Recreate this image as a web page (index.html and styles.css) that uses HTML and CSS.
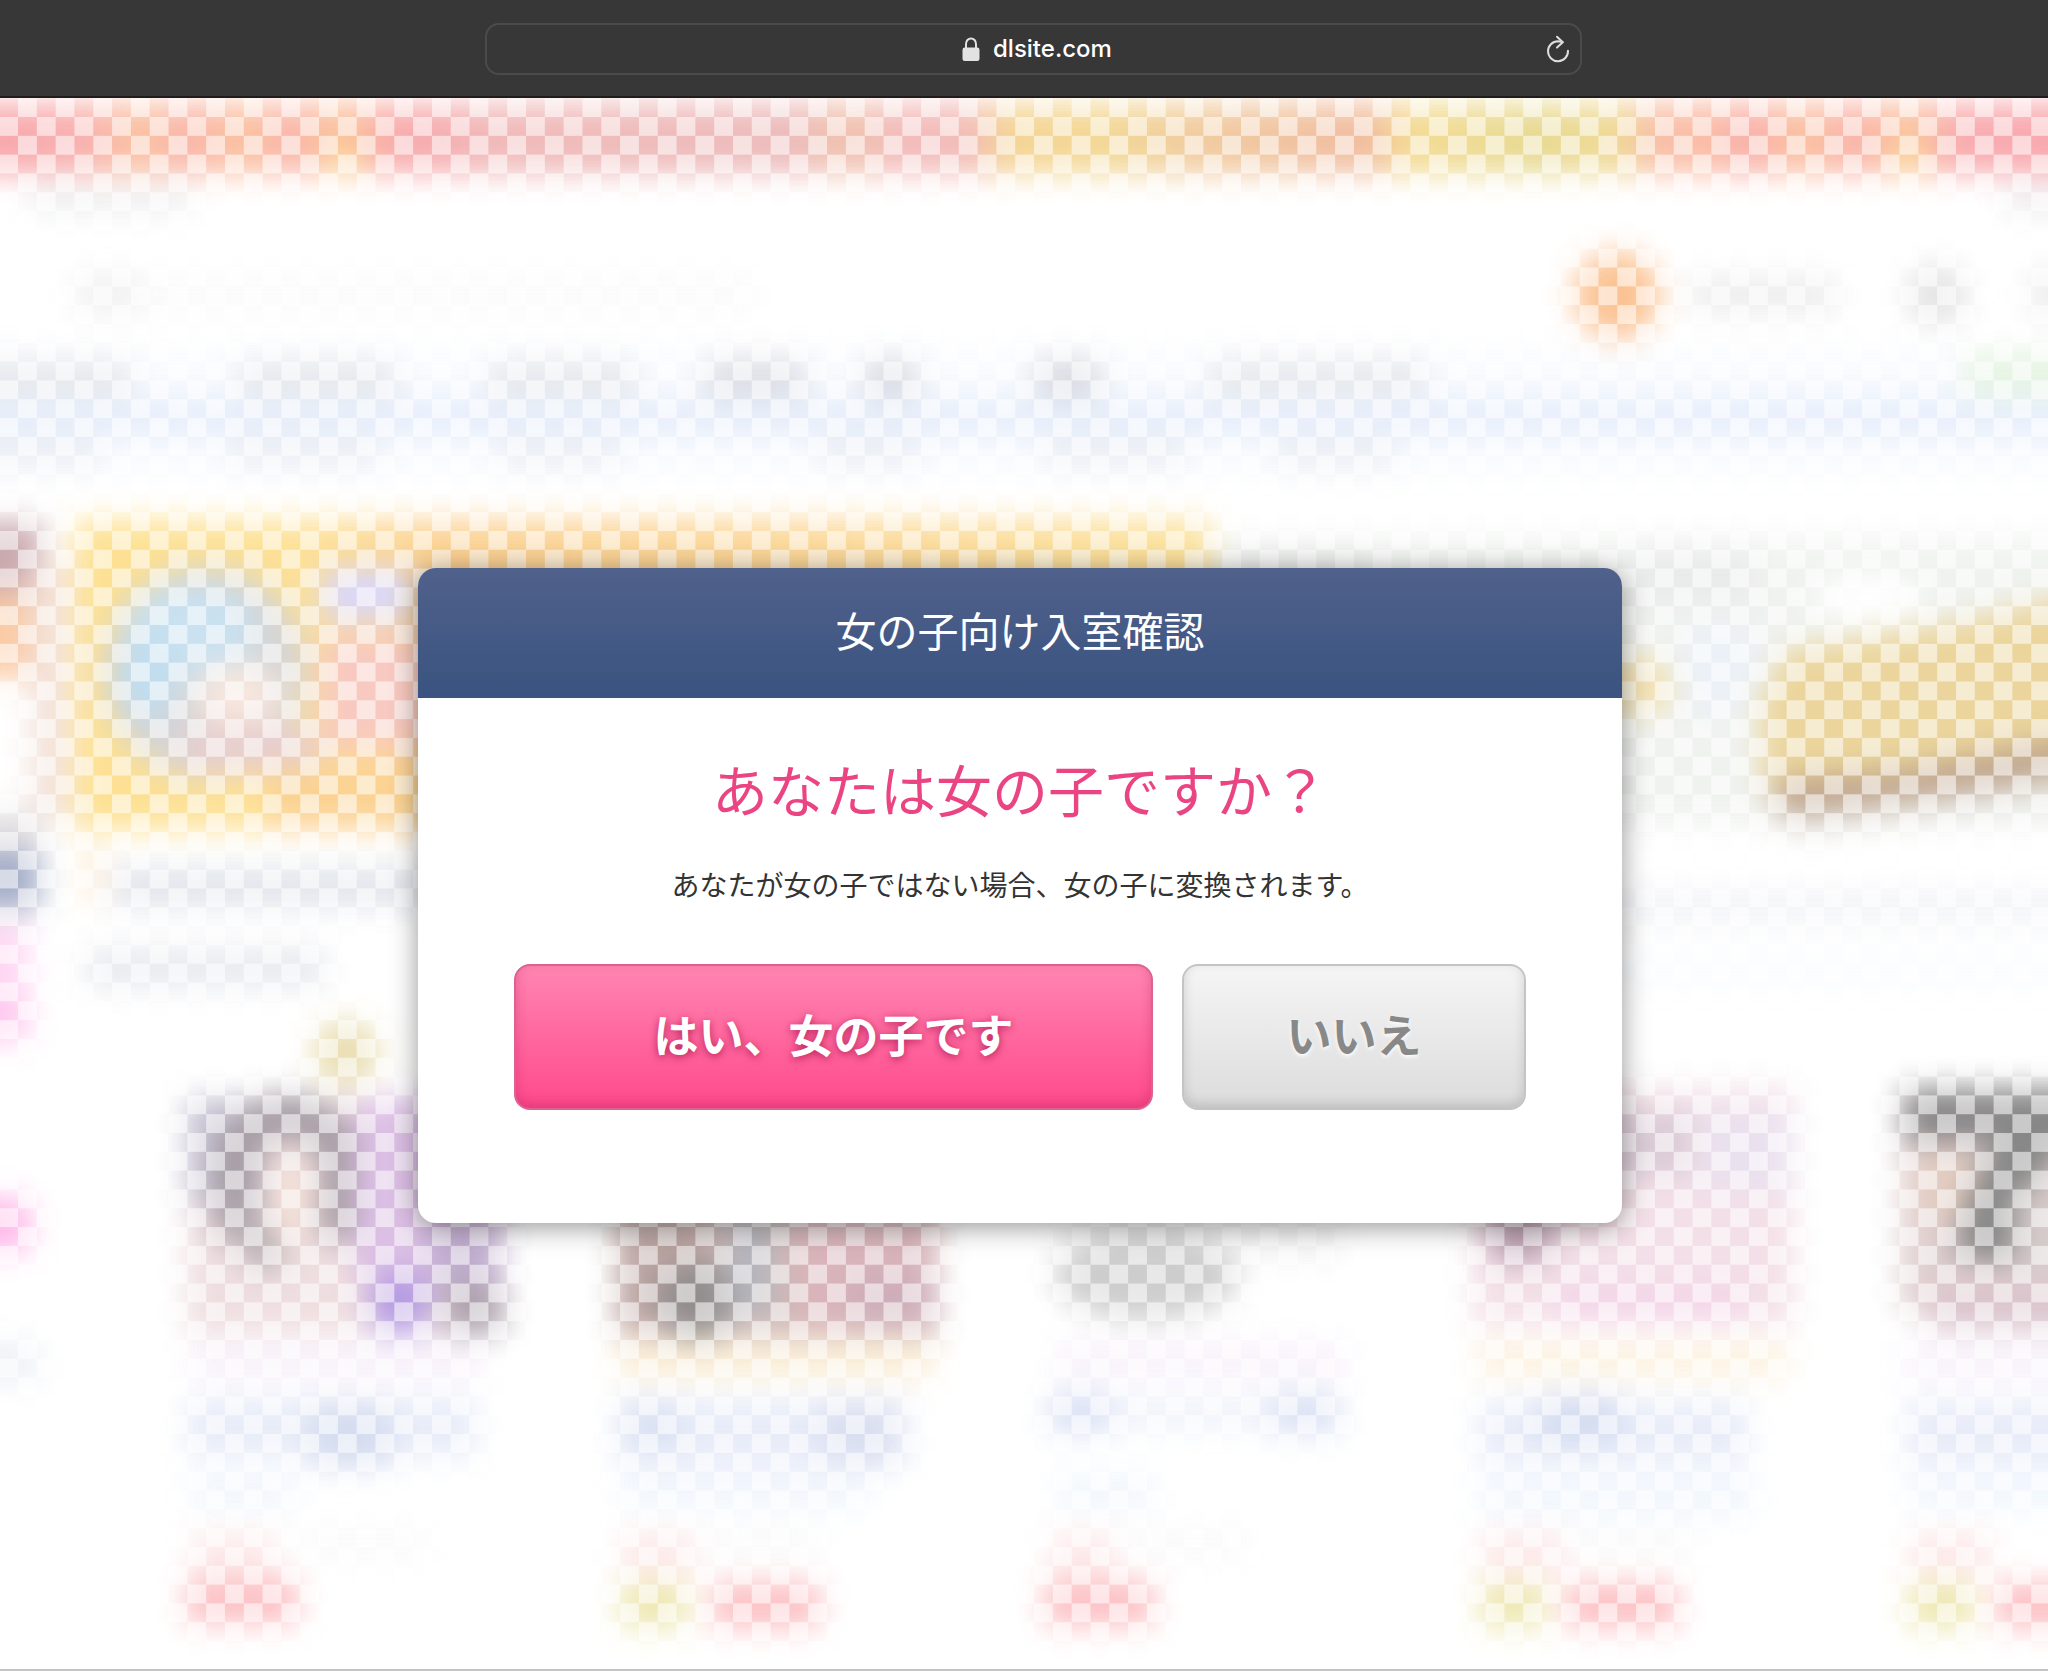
FILE: index.html
```html
<!DOCTYPE html>
<html lang="ja">
<head>
<meta charset="utf-8">
<meta name="viewport" content="width=device-width, initial-scale=1">
<title>女の子向け入室確認</title>
<link rel="stylesheet" href="styles.css">
</head>
<body>
<header class="toolbar">
  <div class="address">
    <label class="address-field">
      <svg class="lock" viewBox="0 0 18 24" aria-hidden="true">
        <path d="M4 12V7a5 5.600 0 0 1 10 0v5" fill="none" stroke="#e2e2e2" stroke-width="2"/>
        <rect x="0.500" y="10.500" width="17" height="13.500" rx="2.200" fill="#e2e2e2"/>
      </svg>
      <input class="address-input" type="text" value="dlsite.com" aria-label="アドレス">
    </label>
    <button class="reload" type="button" aria-label="再読み込み">
      <svg viewBox="0 0 24 28" aria-hidden="true">
        <path d="M16.500 7L12 6.200A10 10 0 1 0 22 15.800" fill="none" stroke="#dedede" stroke-width="2" stroke-linecap="round" stroke-linejoin="round"/>
        <path d="M11 1.800L16.800 7.200L11 12.600" fill="none" stroke="#dedede" stroke-width="2" stroke-linecap="round" stroke-linejoin="round"/>
      </svg>
    </button>
  </div>
</header>

<main class="page">
  <svg class="backdrop" viewBox="0 98 2048 1571" preserveAspectRatio="xMidYMin slice" aria-hidden="true">
    <defs>
      <filter id="soft" filterUnits="userSpaceOnUse" x="-60" y="60" width="2170" height="1650" color-interpolation-filters="sRGB"><feGaussianBlur stdDeviation="15"/></filter>
      <linearGradient id="strip" gradientUnits="userSpaceOnUse" x1="0" y1="0" x2="2048" y2="0">
        <stop offset="0" stop-color="#f8a4a8"/>
        <stop offset=".04" stop-color="#f8acac"/>
        <stop offset=".067" stop-color="#fac09c"/>
        <stop offset=".09" stop-color="#f9b2a6"/>
        <stop offset=".12" stop-color="#fbc09c"/>
        <stop offset=".14" stop-color="#f9b2a8"/>
        <stop offset=".168" stop-color="#fbc094"/>
        <stop offset=".19" stop-color="#f8a8a8"/>
        <stop offset=".21" stop-color="#f6a8ac"/>
        <stop offset=".24" stop-color="#f0b6b6"/>
        <stop offset=".39" stop-color="#ecb8b8"/>
        <stop offset=".41" stop-color="#efc0a8"/>
        <stop offset=".44" stop-color="#f2b8b8"/>
        <stop offset=".475" stop-color="#f2b8b4"/>
        <stop offset=".49" stop-color="#f4d290"/>
        <stop offset=".54" stop-color="#f2d690"/>
        <stop offset=".58" stop-color="#f0ca9a"/>
        <stop offset=".67" stop-color="#f0b89c"/>
        <stop offset=".685" stop-color="#f4da8e"/>
        <stop offset=".75" stop-color="#e6d88e"/>
        <stop offset=".79" stop-color="#efd890"/>
        <stop offset=".81" stop-color="#f9b9a6"/>
        <stop offset=".83" stop-color="#fabca0"/>
        <stop offset=".855" stop-color="#f9aca8"/>
        <stop offset=".88" stop-color="#fbc09c"/>
        <stop offset=".905" stop-color="#f9b0a8"/>
        <stop offset=".933" stop-color="#fbc098"/>
        <stop offset=".955" stop-color="#f8a8ac"/>
        <stop offset="1" stop-color="#f8a4aa"/>
      </linearGradient>
      <linearGradient id="sale" gradientUnits="userSpaceOnUse" x1="80" y1="0" x2="1210" y2="0">
        <stop offset="0" stop-color="#fddf8c"/>
        <stop offset=".2" stop-color="#fddf90"/>
        <stop offset=".32" stop-color="#fbce8c"/>
        <stop offset=".6" stop-color="#fbd492"/>
        <stop offset="1" stop-color="#fbe096"/>
      </linearGradient>
      <pattern id="checker" patternUnits="userSpaceOnUse" x="-0.800" y="98.200" width="37.630" height="37.630">
        <path d="M18.815 0h18.815v18.815h-18.815zM0 18.815h18.815v18.815h-18.815z" fill="#fff" fill-opacity=".55"/>
      </pattern>
    </defs>
    <rect x="0" y="98" width="2048" height="1571" fill="#fff"/>

    <g filter="url(#soft)" opacity=".94">
      <rect x="-60" y="104" width="2170" height="70" fill="url(#strip)"/>
      <circle cx="344" cy="158" r="14" fill="#fbe08c"/>
      <circle cx="1908" cy="154" r="14" fill="#fbe08c"/>
      <!-- site header -->
      <rect x="30" y="184" width="160" height="30" fill="#eeeff0"/>
      <rect x="2005" y="186" width="100" height="26" fill="#ebe8ec"/>
      <rect x="75" y="272" width="65" height="44" fill="#f1f1f1"/>
      <rect x="140" y="276" width="620" height="36" fill="#fafafa"/>
      <circle cx="1617" cy="295" r="44" fill="#fbc08e"/>
      <rect x="1690" y="276" width="146" height="38" fill="#ececec"/>
      <circle cx="1937" cy="295" r="32" fill="#e4e4e4"/>
      <rect x="2030" y="268" width="60" height="52" fill="#ededed"/>

      <!-- navigation rows -->
      <rect x="-60" y="350" width="2170" height="125" fill="#f8fafe"/>
      <rect x="-60" y="398" width="2170" height="38" fill="#e5eefb"/>
      <g fill="#e5e6eb">
        <rect x="-60" y="360" width="190" height="36"/>
        <rect x="240" y="360" width="155" height="36"/>
        <rect x="490" y="360" width="145" height="36"/>
        <rect x="705" y="358" width="100" height="40" fill="#dcdde4"/>
        <rect x="865" y="358" width="50" height="40" fill="#d8d9e0"/>
        <rect x="1035" y="358" width="65" height="40" fill="#d8d9e0"/>
        <rect x="1210" y="360" width="215" height="34"/>
      </g>
      <rect x="1965" y="352" width="130" height="42" fill="#e4f4e0"/>
      <g fill="#ebeef3">
        <rect x="-60" y="438" width="160" height="32"/>
        <rect x="230" y="438" width="150" height="32"/>
        <rect x="500" y="438" width="120" height="32"/>
        <rect x="820" y="438" width="100" height="32"/>
        <rect x="1045" y="438" width="140" height="32"/>
        <rect x="1275" y="438" width="120" height="32"/>
      </g>

      <!-- left neighbour column -->
      <rect x="-60" y="522" width="102" height="72" fill="#c6a4aa"/>
      <rect x="-60" y="592" width="94" height="86" fill="#fbc8a0"/>
      <rect x="30" y="560" width="40" height="260" fill="#f2e0d8"/>
      <rect x="-60" y="812" width="100" height="40" fill="#e0dcdf"/>
      <rect x="-60" y="850" width="100" height="60" fill="#9ea8c4"/>
      <rect x="-60" y="922" width="88" height="120" fill="#ffd4f2"/>
      <rect x="-60" y="1000" width="88" height="34" fill="#ffc2ec"/>
      <rect x="-60" y="1198" width="90" height="54" fill="#ffb4e8"/>
      <rect x="-60" y="1340" width="100" height="44" fill="#edf1f6"/>

      <!-- main banner -->
      <rect x="74" y="520" width="1136" height="310" fill="url(#sale)"/>
      <ellipse cx="205" cy="672" rx="102" ry="106" fill="#d2d2d4"/>
      <ellipse cx="190" cy="630" rx="66" ry="46" fill="#c6e0f0"/>
      <ellipse cx="148" cy="676" rx="28" ry="44" fill="#bcdcf0"/>
      <ellipse cx="238" cy="696" rx="44" ry="34" fill="#f7e6dc"/>
      <ellipse cx="250" cy="748" rx="76" ry="26" fill="#e6cccc"/>
      <rect x="322" y="568" width="90" height="52" fill="#d8d6fc"/>
      <rect x="322" y="636" width="110" height="112" fill="#f8c6be"/>
      <rect x="270" y="768" width="160" height="62" fill="#fbd08c"/>
      <rect x="80" y="842" width="24" height="60" fill="#fdeed8"/>
      <rect x="112" y="866" width="320" height="42" fill="#e0e3ea"/>
      <rect x="86" y="948" width="240" height="40" fill="#e6e8ed"/>
      <circle cx="346" cy="1053" r="34" fill="#e8dcae"/>

      <!-- second banner -->
      <rect x="1212" y="538" width="900" height="288" fill="#eff2ef"/>
      <rect x="1225" y="556" width="140" height="40" fill="#e4e6e4"/>
      <rect x="1630" y="552" width="120" height="50" fill="#e8e9e9"/>
      <ellipse cx="1868" cy="598" rx="56" ry="24" fill="#fff"/>
      <ellipse cx="1720" cy="668" rx="46" ry="50" fill="#ebf1f7"/>
      <ellipse cx="1636" cy="686" rx="38" ry="30" fill="#f2dfac"/>
      <path d="M1760 700L1786 650L1950 624L2110 588V770L1800 806L1764 790Z" fill="#ead396"/>
      <path d="M1776 798L1900 788L2110 748" fill="none" stroke="#ba9e86" stroke-width="36"/>
      <path d="M1790 828L2110 782" fill="none" stroke="#e4e4e0" stroke-width="20"/>
      <rect x="1600" y="890" width="500" height="34" fill="#f2f3f7"/>
      <rect x="1600" y="950" width="500" height="40" fill="#fafcfe"/>

      <!-- thumbnail 1 -->
      <rect x="186" y="1098" width="316" height="236" fill="#eedcde"/>
      <rect x="186" y="1098" width="80" height="104" fill="#c2bed0"/>
      <path d="M236 1240V1150Q290 1080 342 1150V1240" fill="none" stroke="#a0969e" stroke-width="44"/>
      <path d="M240 1210L274 1266" fill="none" stroke="#b0a8ae" stroke-width="36"/>
      <ellipse cx="290" cy="1200" rx="22" ry="50" fill="#f6e0d8"/>
      <rect x="354" y="1098" width="148" height="184" fill="#dabce4"/>
      <rect x="430" y="1225" width="72" height="60" fill="#bca8cc"/>
      <circle cx="400" cy="1303" r="32" fill="#b094e2"/>
      <rect x="444" y="1284" width="60" height="50" fill="#a89ca6"/>
      <rect x="190" y="1344" width="290" height="36" fill="#f7effa"/>

      <!-- thumbnail 2 -->
      <rect x="616" y="1210" width="322" height="126" fill="#ccb4b2"/>
      <rect x="616" y="1210" width="90" height="112" fill="#b8a09c"/>
      <circle cx="696" cy="1300" r="40" fill="#8c8888"/>
      <rect x="728" y="1215" width="44" height="100" fill="#b0b2ba"/>
      <rect x="795" y="1215" width="140" height="112" fill="#d8b0b6"/>
      <rect x="850" y="1270" width="86" height="56" fill="#ccaab6"/>
      <rect x="618" y="1340" width="316" height="38" fill="#faecd2"/>

      <!-- thumbnail 3 -->
      <rect x="1060" y="1210" width="280" height="50" fill="#f2f2f2"/>
      <ellipse cx="1146" cy="1276" rx="92" ry="44" fill="#cacaca"/>
      <rect x="1056" y="1342" width="290" height="36" fill="#f8f0fb"/>

      <!-- thumbnail 4 -->
      <rect x="1472" y="1088" width="322" height="238" fill="#f3dee6"/>
      <rect x="1600" y="1110" width="90" height="66" fill="#d8c8d4"/>
      <rect x="1700" y="1110" width="90" height="80" fill="#e9e0ef"/>
      <rect x="1490" y="1200" width="60" height="62" fill="#b89cae"/>
      <rect x="1560" y="1286" width="180" height="34" fill="#f3d2e8"/>
      <rect x="1474" y="1342" width="316" height="36" fill="#fcf1de"/>

      <!-- thumbnail 5 -->
      <rect x="1900" y="1090" width="210" height="224" fill="#decccc"/>
      <rect x="1904" y="1088" width="204" height="54" fill="#828082"/>
      <ellipse cx="1946" cy="1184" rx="32" ry="38" fill="#e2cabe"/>
      <path d="M2060 1110Q1994 1170 1984 1260" fill="none" stroke="#808080" stroke-width="58"/>
      <rect x="2014" y="1190" width="90" height="80" fill="#d4c8c8"/>
      <rect x="1930" y="1286" width="180" height="44" fill="#d8c0ca"/>
      <rect x="1904" y="1346" width="200" height="34" fill="#f7effb"/>

      <!-- captions -->
      <g fill="#e6ebf8">
        <rect x="186" y="1398" width="290" height="60"/>
        <rect x="310" y="1404" width="80" height="64" fill="#d2daee"/>
        <rect x="618" y="1398" width="290" height="70"/>
        <rect x="620" y="1398" width="60" height="50" fill="#d8e0f2"/>
        <rect x="820" y="1400" width="76" height="66" fill="#d8ddf0"/>
        <rect x="1050" y="1396" width="290" height="34" fill="#eef2fa"/>
        <rect x="1048" y="1392" width="62" height="42" fill="#d8e0f4"/>
        <rect x="1270" y="1392" width="70" height="42" fill="#d8e0f4"/>
        <rect x="1478" y="1400" width="270" height="64"/>
        <rect x="1540" y="1394" width="80" height="50" fill="#d2daf0"/>
        <rect x="1906" y="1400" width="200" height="66"/>
      </g>
      <g fill="#f0f6fd">
        <rect x="190" y="1474" width="106" height="36"/>
        <rect x="620" y="1474" width="250" height="36"/>
        <rect x="1056" y="1474" width="100" height="36"/>
        <rect x="1478" y="1474" width="276" height="44"/>
        <rect x="1906" y="1474" width="200" height="36"/>
      </g>
      <g fill="#fde8e8">
        <rect x="192" y="1532" width="84" height="44"/>
        <rect x="620" y="1532" width="76" height="44"/>
        <rect x="1050" y="1532" width="66" height="44"/>
        <rect x="1480" y="1532" width="86" height="44"/>
        <rect x="1908" y="1532" width="84" height="44"/>
      </g>
      <g fill="#fafafa">
        <rect x="300" y="1526" width="130" height="36"/>
        <rect x="710" y="1526" width="110" height="36"/>
        <rect x="1130" y="1526" width="120" height="36"/>
        <rect x="1576" y="1526" width="120" height="36"/>
      </g>
      <g fill="#fcbcc0">
        <rect x="186" y="1578" width="112" height="46"/>
        <rect x="712" y="1582" width="108" height="46"/>
        <rect x="1044" y="1580" width="110" height="46"/>
        <rect x="1566" y="1582" width="112" height="46"/>
        <rect x="1996" y="1582" width="112" height="46"/>
      </g>
      <g fill="#ede6ac">
        <rect x="620" y="1582" width="68" height="46"/>
        <rect x="1480" y="1582" width="66" height="46"/>
        <rect x="1908" y="1582" width="66" height="46"/>
      </g>
    </g>
    <rect x="0" y="98" width="2048" height="1571" fill="url(#checker)"/>
  </svg>

  <section class="dialog" role="dialog" aria-labelledby="dialog-title">
    <h1 class="dialog-title" id="dialog-title">女の子向け入室確認</h1>
    <div class="dialog-body">
      <h2 class="question">あなたは女の子ですか？</h2>
      <p class="note">あなたが女の子ではない場合、女の子に変換されます。</p>
      <div class="actions">
        <button class="btn btn-yes" type="button">はい、女の子です</button>
        <button class="btn btn-no" type="button">いいえ</button>
      </div>
    </div>
  </section>
</main>
</body>
</html>
```
FILE: styles.css
```css
* {
  box-sizing: border-box;
}

body {
  margin: 0;
  background: #fff;
  color: #333;
  font-family: "Noto Sans CJK JP", sans-serif;
}

button,
input {
  font: inherit;
}

/* Browser toolbar */
.toolbar {
  display: flex;
  justify-content: center;
  padding: 23px 0 21px 19px;
  background: #373737;
  border-bottom: 2px solid #1e1c1c;
}

.address {
  display: flex;
  align-items: center;
  width: 1097px;
  max-width: 100%;
  height: 52px;
  padding: 0 10px 0 42px;
  border: 2px solid #4b4b4b;
  border-radius: 14px;
}

.address-field {
  flex: 1;
  display: flex;
  align-items: center;
  justify-content: center;
  gap: 13px;
}

.lock {
  width: 18px;
  height: 24px;
}

.address-input {
  width: 120px;
  padding: 0;
  border: 0;
  outline: 0;
  background: none;
  color: #fff;
  font: 500 24px/32px Inter, sans-serif;
}

.reload {
  width: 24px;
  height: 28px;
  padding: 0;
  border: 0;
  background: none;
}

.reload svg {
  display: block;
}

/* Page behind the dialog */
.page {
  position: relative;
  padding: 470px 8px 446px 0;
  overflow: hidden;
  border-bottom: 2px solid #c4c4c4;
}

.backdrop {
  position: absolute;
  inset: 0;
  width: 100%;
  height: 100%;
}

/* Entry confirmation */
.dialog {
  position: relative;
  max-width: 1204px;
  margin: 0 auto;
  overflow: hidden;
  border-radius: 18px;
  background: #fff;
  box-shadow: 0 4px 28px rgba(0, 0, 0, 0.42);
  text-align: center;
}

.dialog-title {
  margin: 0;
  padding: 29px 0 37px;
  background: linear-gradient(#50618b, #3a5380);
  color: #fff;
  font-size: 41px;
  font-weight: 400;
  line-height: 64px;
}

.dialog-body {
  padding: 50px 96px 113px;
}

.question {
  margin: 0;
  color: #ea4483;
  font-size: 56px;
  font-weight: 400;
  line-height: 80px;
}

.note {
  margin: 34px 0 58px;
  font-size: 28px;
  line-height: 44px;
}

.actions {
  display: flex;
  gap: 29px;
}

.btn {
  height: 146px;
  padding: 0 0 6px;
  border: 2px solid;
  border-radius: 16px;
  font-size: 45px;
  font-weight: 700;
  line-height: 64px;
}

.btn-yes {
  flex: 1;
  border-color: #dc6290;
  background: linear-gradient(#ff85b1, #ff4a8c);
  box-shadow: inset 0 -4px 12px rgba(160, 20, 80, 0.3);
  color: #fff;
  text-shadow: 0 2px 8px rgba(150, 0, 60, 0.7);
}

.btn-no {
  width: 344px;
  border-color: #c4c4c4;
  background: linear-gradient(#f5f5f5, #dcdcdc);
  box-shadow: inset 0 -4px 12px rgba(0, 0, 0, 0.14);
  color: #888;
  text-shadow: 0 2px 4px #fff;
}
```
